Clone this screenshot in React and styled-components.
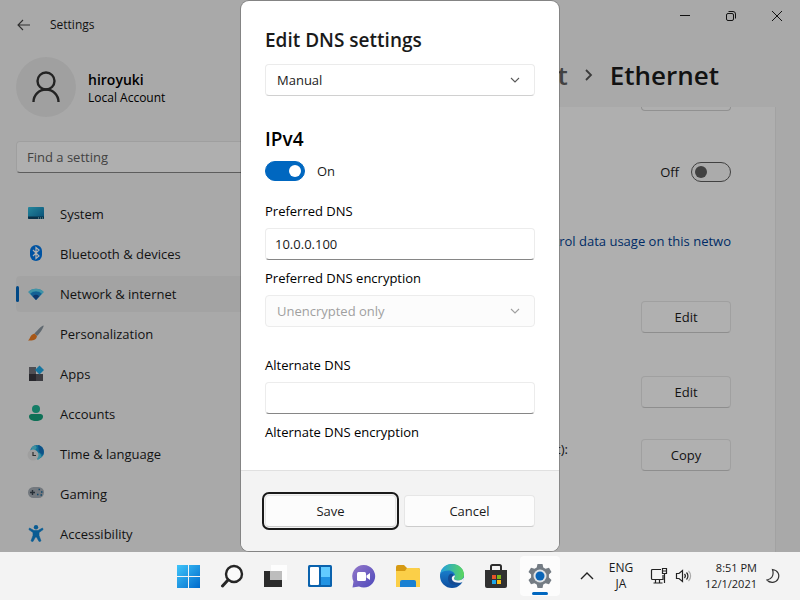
import React, { useState } from "react";
import styled, { createGlobalStyle } from "styled-components";

const Global = createGlobalStyle`
  * { box-sizing: border-box; }
  html, body { margin: 0; }
  body, button, input, select { font-family: "Open Sans", "Noto Sans", sans-serif; font-size: 13px; line-height: 20px; color: #1a1a1a; }
  button { cursor: pointer; }
`;

const Desktop = styled.div`
  display: flex; flex-direction: column; height: 100vh; overflow: hidden; background: #f3f3f3;
`;
const Window = styled.div`
  position: relative; flex: 1; min-height: 0; display: flex; flex-direction: column; overflow: hidden; background: #f3f3f3;
`;
const TitleBar = styled.header`
  display: flex; align-items: flex-start; justify-content: space-between; height: 50px; flex: none;
`;
const TitleLeft = styled.div`
  display: flex; align-items: center; gap: 19px; padding-left: 17px; height: 50px; font-size: 12px;
`;
const WindowControls = styled.div`
  display: flex;
`;
const PlainButton = styled.button`
  display: grid; place-items: center; padding: 0; border: 0; background: none; width: ${(p) => p.$w || 14}px; height: 32px;
`;
const Body = styled.div`
  flex: 1; min-height: 0; display: grid; grid-template-columns: 286px minmax(0, 1fr);
`;
const Sidebar = styled.aside`
  display: flex; flex-direction: column; padding-left: 16px; min-height: 0;
`;
const Profile = styled.div`
  display: flex; align-items: center; gap: 12px; margin-top: 7px;
`;
const Avatar = styled.div`
  width: 60px; height: 60px; border-radius: 50%; display: grid; place-items: center; background: #e6e6e6;
`;
const UserText = styled.div`
  padding-top: 2px; color: #000;
`;
const UserName = styled.div`
  font-weight: 600; line-height: 20px; font-size: 14px;
`;
const UserKind = styled.div`
  font-size: 12px; line-height: 16px;
`;
const Search = styled.input`
  margin-top: 24px; height: 32px; padding: 0 10px; border: 1px solid #e4e4e4; border-bottom-color: #868686; border-radius: 4px; background: #fbfbfb;
  &::placeholder { color: #606060; opacity: 1; }
`;
const Nav = styled.nav`
  display: flex; flex-direction: column; gap: 4px; margin-top: 23px;
`;
const NavItem = styled.a`
  display: flex; align-items: center; gap: 13px; flex: none; height: 36px; border-radius: 4px; color: #1a1a1a; text-decoration: none;
  background: ${(p) => (p.$active ? "#eaeaea" : "none")};
  &::before { content: ""; width: 3px; height: 16px; margin-right: -7px; border-radius: 2px; background: ${(p) => (p.$active ? "#0067c0" : "none")}; }
`;
const NavIcon = styled.svg`
  width: 20px; height: 20px; margin: 0 1px; flex: none; display: block;
`;
const Main = styled.main`
  display: flex; flex-direction: column; min-width: 0; padding: 0 24px;
`;
const Crumbs = styled.h1`
  display: flex; align-items: center; justify-content: flex-end; gap: 17px; margin: 7px 57px 14px 0; height: 36px; font-size: 26px; line-height: 36px; font-weight: 600; white-space: nowrap; flex: none; color: #1a1a1a;
`;
const CrumbLink = styled.a`
  color: #5f5f5f; text-decoration: none;
`;
const Card = styled.section`
  flex: 1; min-height: 0; overflow: hidden; background: #fbfbfb; border-right: 1px solid #e8e8e8; padding: 0 44px 0 16px;
`;
const CutButton = styled.div`
  height: 4px; width: 90px; margin-left: auto; border: 1px solid #d0d0d0; border-top: 0; border-radius: 0 0 4px 4px;
`;
const SettingRow = styled.div`
  display: flex; align-items: center; justify-content: ${(p) => (p.$spread ? "space-between" : "flex-end")}; gap: 12px; height: 32px; margin-top: ${(p) => p.$top}px;
`;
const DataLink = styled.a`
  display: flex; justify-content: flex-end; margin-top: 43px; white-space: nowrap; color: #003e92; text-decoration: none;
`;
const SpeedLabel = styled.span`
  width: 242px; text-align: right; padding-bottom: 12px;
`;
const Button = styled.button`
  height: 32px; width: 90px; flex: ${(p) => (p.$grow ? "1" : "none")}; border: 1px solid #e6e6e6; border-bottom-color: #cccccc; border-radius: 4px; background: #fcfcfc; padding: 0;
  outline: ${(p) => (p.$focus ? "2px solid #1a1a1a" : "none")}; outline-offset: 1px;
`;
const ToggleLabel = styled.label`
  display: flex; align-items: center; gap: 12px; width: fit-content;
`;
const Toggle = styled.input`
  appearance: none; margin: 0; width: 40px; height: 20px; border: 1px solid #5d5d5d; border-radius: 10px; background: #f5f5f5; display: flex; align-items: center; padding: 0 3px;
  &::before { content: ""; width: 12px; height: 12px; border-radius: 50%; background: #5d5d5d; }
  &:checked { background: #0067c0; border-color: #0067c0; justify-content: flex-end; }
  &:checked::before { background: #fff; }
`;
const Scrim = styled.div`
  position: absolute; inset: 0; display: flex; justify-content: center; padding: 1px; background: rgba(0, 0, 0, 0.3);
`;
const Dialog = styled.form`
  display: flex; flex-direction: column; width: 318px; max-width: 100%; border-radius: 8px; overflow: hidden; background: #fff; box-shadow: 0 0 0 1px rgba(0, 0, 0, 0.22);
`;
const DialogBody = styled.div`
  flex: 1; min-height: 0; overflow: hidden; display: flex; flex-direction: column; padding: 25px 24px 0;
`;
const DialogTitle = styled.h2`
  margin: 0; font-size: 19px; line-height: 28px; font-weight: 600;
`;
const GroupTitle = styled.h3`
  margin: 29px 0 0; font-size: 19px; line-height: 28px; font-weight: 600; color: #000;
`;
const ToggleLine = styled.div`
  margin-top: 8px;
`;
const Label = styled.label`
  margin-top: ${(p) => p.$top}px; line-height: 20px; color: #000;
`;
const TextBox = styled.input`
  flex: none; height: 32px; width: 100%; padding: 0 9px; border: 1px solid #ececec; border-bottom-color: #868686; border-radius: 4px; background: #fff; margin-top: 7px; outline: none;
`;
const SelectBox = styled.div`
  display: grid; align-items: center; flex: none; margin-top: ${(p) => p.$top}px;
  > * { grid-area: 1 / 1; }
  > svg { justify-self: end; margin-right: 14px; pointer-events: none; }
`;
const Select = styled.select`
  appearance: none; width: 100%; height: 32px; padding: 0 11px; border: 1px solid #ebebeb; border-bottom-color: #d0d0d0; border-radius: 4px; background: #fff; opacity: 1;
  &:disabled { color: #a0a0a0; background: #fcfcfc; border-color: #ececec; }
`;
const DialogFooter = styled.footer`
  flex: none; display: flex; gap: 8px; padding: 24px; border-top: 1px solid #e0e0e0; background: #f3f3f3;
`;

const Taskbar = styled.footer`
  flex: none; height: 48px; display: flex; align-items: center; justify-content: flex-end; background: #f3f3f3;
`;
const Apps = styled.div`
  display: flex; align-items: center; gap: 4px; margin-right: 15px;
`;
const AppButton = styled.button`
  position: relative; width: 40px; height: 40px; padding: 0; border: 0; border-radius: 4px; display: grid; place-items: center; background: ${(p) => (p.$active ? "#fcfcfc" : "none")};
  &::after { content: ""; position: absolute; bottom: 1px; left: 12px; right: 12px; height: 3px; border-radius: 2px; background: ${(p) => (p.$active ? "#0067c0" : "none")}; }
`;
const Tray = styled.div`
  display: flex; align-items: center;
`;
const TrayText = styled.button`
  border: 0; background: none; padding: 0; width: ${(p) => p.$w}px; text-align: ${(p) => p.$align || "center"}; font-size: ${(p) => p.$size || 12}px; line-height: 16px; margin-right: ${(p) => p.$gap}px;
`;
const TrayButton = styled.button`
  border: 0; background: none; padding: 0; display: grid; place-items: center; height: 40px; width: ${(p) => p.$w}px; margin-right: ${(p) => p.$gap || 0}px;
`;

const Chevron = ({ color = "#5a5a5a" }) => (
  <svg width="12" height="12" viewBox="0 0 12 12" fill="none" stroke={color} strokeWidth="1.1"><path d="M2 4l4 4 4-4" /></svg>
);

const icons = {
  system: (
    <>
      <defs><linearGradient id="sy" x1="0" y1="0" x2="1" y2="1"><stop stopColor="#35c1e0" /><stop offset="1" stopColor="#0a6fa8" /></linearGradient></defs>
      <rect x="2" y="3" width="16" height="12" rx="1" fill="url(#sy)" /><path d="M2 12.5h16V14a1 1 0 0 1-1 1H3a1 1 0 0 1-1-1z" fill="#0c4668" /><path d="M12 14h1M14 14h1M16 14h1" stroke="#aee" />
    </>
  ),
  bluetooth: (
    <><rect x="4" y="1" width="12" height="16" rx="6" fill="#0078e8" /><path d="M7 6l6 6-3 2.500V3.500L13 6l-6 6" fill="none" stroke="#fff" strokeWidth="1.2" /></>
  ),
  network: (
    <>
      <path d="M10 16L2.300 8a11 11 0 0 1 15.400 0z" fill="#35c3ee" /><path d="M10 16L4.300 10a8 8 0 0 1 11.400 0z" fill="#1a8ad4" /><path d="M10 16L6.700 12.300a5 5 0 0 1 6.600 0z" fill="#144f9c" /><path d="M2.300 8a11 11 0 0 1 15.400 0l-1.500 1.600a9 9 0 0 0-12.400 0z" fill="#5fd3ee" />
    </>
  ),
  brush: (
    <><path d="M17.500 1.500c.8.8-2.500 6.500-6.500 10.500L8.500 9.500C12 5.500 16.500 1 17.500 1.500z" fill="#8995a0" /><path d="M8.500 9.500L11 12c-.8 4-3.500 5-9 4.500 2.500-1.500 1.500-5.500 6.500-7z" fill="#ef7d22" /></>
  ),
  apps: (
    <><path d="M3 3h7v7H3z" fill="#707078" /><path d="M3 10h7v7H3z" fill="#393940" /><path d="M10 10h7v7h-7z" fill="#56565e" /><path d="M13.500 1.500L18 6l-4.500 4.500L9 6z" fill="#20a8e4" /></>
  ),
  accounts: (
    <><circle cx="10" cy="5" r="4" fill="#1db392" /><path d="M3 12.500C3 11 4 10 5.500 10h9c1.500 0 2.500 1 2.500 2.500 0 3-3 4.500-7 4.500s-7-1.500-7-4.500z" fill="#15a17c" /></>
  ),
  time: (
    <><circle cx="11" cy="8" r="7" fill="#18a0d8" /><path d="M6 3c3-3 6 0 4 2s0 3 3 4 1 5 4 2l-5 5-8-6z" fill="#56cde4" /><path d="M12 1c5 1 7 6 5 10l-4-3z" fill="#1475c2" /><circle cx="7" cy="11" r="5.500" fill="#e4e4e4" /><path d="M7 8v3.500h3" fill="none" stroke="#444" strokeWidth="1.2" /></>
  ),
  gaming: (
    <><rect x="2" y="3" width="16" height="11" rx="5.500" fill="#a5adb5" /><path d="M4 8.500h5M6.500 6v5" stroke="#39444f" strokeWidth="1.4" /><path d="M12.500 5.500h1.500M15 8h1.500M11 10.500h1.500M14.500 11h1.500" stroke="#1b699b" strokeWidth="1.6" /></>
  ),
  access: (
    <><circle cx="10" cy="3.200" r="2.200" fill="#0e84d3" /><path d="M3.500 4l4.500 2.500h4L16.500 4l.6 1.600L13 8.500v3l2 5.500-1.900.6L10.500 13h-1l-2.600 4.600L5 17l2-5.500v-3L2.900 5.600z" fill="#0e84d3" stroke="#0e84d3" strokeWidth=".6" /></>
  ),
};

const navItems = [
  ["System", "system"], ["Bluetooth & devices", "bluetooth"], ["Network & internet", "network"], ["Personalization", "brush"],
  ["Apps", "apps"], ["Accounts", "accounts"], ["Time & language", "time"], ["Gaming", "gaming"], ["Accessibility", "access"],
];

const taskIcons = [
  ["Start", <><defs><linearGradient id="st" x1="0" y1="0" x2="1" y2="1"><stop stopColor="#3fc5fa" /><stop offset="1" stopColor="#0069cb" /></linearGradient></defs><path d="M1 1h11v11H1zM13 1h11v11H13zM1 13h11v11H1zM13 13h11v11H13z" fill="url(#st)" /></>],
  ["Search", <><circle cx="14" cy="10" r="8" fill="#fafafa" stroke="#262626" strokeWidth="2.4" /><path d="M8 16l-5.500 6" stroke="#262626" strokeWidth="3" strokeLinecap="round" /></>],
  ["Task view", <><path d="M7 1h16v15H7z" fill="#fff" opacity=".8" /><path d="M0 7h18v16H0z" fill="#2b2b2b" /><path d="M6 7h12v9H6z" fill="#bdbdbd" /></>],
  ["Widgets", <><rect y="1" width="24" height="22" rx="1.500" fill="#0a62ad" /><rect x="2" y="3" width="9" height="18" rx="1" fill="#fff" /><rect x="13" y="3" width="9" height="10" fill="#62cbff" /><rect x="13" y="13" width="9" height="8" fill="#2193e3" /></>],
  ["Chat", <><defs><linearGradient id="ch" x1="0" y1="0" x2="1" y2="1"><stop stopColor="#9478c9" /><stop offset="1" stopColor="#4d48bb" /></linearGradient></defs><path d="M12 1a11.300 11.300 0 1 1-5 21.500L.5 23.500l1-6A11.300 11.300 0 0 1 12 1z" fill="url(#ch)" /><rect x="5" y="8" width="9" height="9" rx="1.500" fill="#fff" /><path d="M14.500 11.500L18 9v7l-3.500-2.500z" fill="#fff" /></>],
  ["File Explorer", <><path d="M0 3a2 2 0 0 1 2-2h6l3 3h11a2 2 0 0 1 2 2v5H0z" fill="#d69a13" /><path d="M0 7h9l2-3h11a2 2 0 0 1 2 2v17H0z" fill="#fbcf48" /><path d="M4 23v-5a2 2 0 0 1 2-2h12a2 2 0 0 1 2 2v5z" fill="#1980d2" /></>],
  ["Edge", <><defs><linearGradient id="e1" x1="0" y1="0" x2="1" y2="0"><stop stopColor="#229ee0" /><stop offset="1" stopColor="#5bd75b" /></linearGradient><linearGradient id="e2" x1="0" y1="0" x2="0" y2="1"><stop stopColor="#1d8fdb" /><stop offset="1" stopColor="#0d4d9e" /></linearGradient></defs><circle cx="12" cy="12" r="12" fill="url(#e2)" /><path d="M.3 9.500C2 3 6.500 0 12 0c7 0 12 5 12 10.500 0 4-3 6-6 6-2.500 0-4-1-4-2s1-1.500 1-3C15 9 12 6.500 8.500 6.500 5 6.500 2 7.500.3 9.500z" fill="url(#e1)" /><path d="M9 11c-3 5 1 11 7 10 3 0 5-2 6-3.500-3 1.500-7 1-9-1.500-1.500-2-1-3 .5-4.500 0-2-3-2.500-4.500-.5z" fill="#134b94" /><path d="M15 11.500c0 1.500-1 2-1 3s1.500 2 4 2c2.500 0 4.500-1 6-3l-.5 4c-3 2-9 1.500-11-1-1.500-2.500-.5-5 2.500-5z" fill="#f3f3f3" /></>],
  ["Microsoft Store", <><path d="M7 6V2.500A1.500 1.500 0 0 1 8.500 1h7A1.500 1.500 0 0 1 17 2.500V6" fill="none" stroke="#2d2d2d" strokeWidth="2" /><path d="M1 6h22v16a2 2 0 0 1-2 2H3a2 2 0 0 1-2-2z" fill="#303030" /><path d="M8 11h4v4H8z" fill="#e75228" /><path d="M13 11h4v4h-4z" fill="#7eb51c" /><path d="M8 16h4v4H8z" fill="#1ca5e8" /><path d="M13 16h4v4h-4z" fill="#fcb813" /></>],
  ["Settings", <><path d="M9.500 0h5l.8 3.500 2.200 1.300L21 3.700l2.500 4.300-2.600 2.500v3l2.600 2.500-2.500 4.300-3.500-1.100-2.200 1.300-.8 3.500h-5l-.8-3.500-2.200-1.300L3 20.300.5 16l2.600-2.500v-3L.5 8 3 3.700l3.500 1.100 2.200-1.300z" fill="#737b83" /><circle cx="12" cy="12" r="6.500" fill="#dfe3e7" /><circle cx="12" cy="12" r="4.500" fill="#0a65b7" /></>],
];

export default function App() {
  const [on, setOn] = useState(true);
  const [metered, setMetered] = useState(false);
  const [dns, setDns] = useState("10.0.0.100");
  return (
    <>
      <Global />
      <Desktop>
        <Window>
          <TitleBar>
            <TitleLeft>
              <PlainButton aria-label="Back"><svg width="14" height="12" viewBox="0 0 14 12" fill="none" stroke="#444" strokeWidth="1.1"><path d="M13 6H1M6 1L1 6l5 5" /></svg></PlainButton>
              <span>Settings</span>
            </TitleLeft>
            <WindowControls>
              <PlainButton $w={46} aria-label="Minimize"><svg width="10" height="10" viewBox="0 0 10 10" stroke="#1a1a1a"><path d="M0 4.500h10" /></svg></PlainButton>
              <PlainButton $w={46} aria-label="Restore"><svg width="10" height="10" viewBox="0 0 10 10" fill="none" stroke="#1a1a1a"><rect x=".5" y="2.500" width="7" height="7" rx="1.500" /><path d="M2.500.5h4.500a2.500 2.500 0 0 1 2.500 2.500V7.500" /></svg></PlainButton>
              <PlainButton $w={46} aria-label="Close"><svg width="10" height="10" viewBox="0 0 10 10" stroke="#1a1a1a"><path d="M0 0l10 10M10 0L0 10" /></svg></PlainButton>
            </WindowControls>
          </TitleBar>
          <Body>
            <Sidebar>
              <Profile>
                <Avatar><svg width="28" height="32" viewBox="0 0 28 32" fill="none" stroke="#333" strokeWidth="2.4"><circle cx="14" cy="10" r="8.500" /><path d="M1.500 31a12.500 12.500 0 0 1 25 0" /></svg></Avatar>
                <UserText><UserName>hiroyuki</UserName><UserKind>Local Account</UserKind></UserText>
              </Profile>
              <Search type="search" aria-label="Find a setting" placeholder="Find a setting" />
              <Nav>
                {navItems.map(([t, k]) => (
                  <NavItem key={k} href="#" $active={k === "network"}><NavIcon viewBox="0 0 20 20">{icons[k]}</NavIcon>{t}</NavItem>
                ))}
              </Nav>
            </Sidebar>
            <Main>
              <Crumbs>
                <CrumbLink href="#">Network &amp; internet</CrumbLink>
                <svg width="8" height="12" viewBox="0 0 8 12" fill="none" stroke="#555" strokeWidth="1.8"><path d="M1 1l5 5-5 5" /></svg>
                <span>Ethernet</span>
              </Crumbs>
              <Card>
                <CutButton />
                <SettingRow $top={45}>
                  <ToggleLabel>Off<Toggle type="checkbox" checked={metered} onChange={(e) => setMetered(e.target.checked)} /></ToggleLabel>
                </SettingRow>
                <DataLink href="#">Set a data limit to help control data usage on this netwo</DataLink>
                <SettingRow $top={50}><Button>Edit</Button></SettingRow>
                <SettingRow $top={43}><Button>Edit</Button></SettingRow>
                <SettingRow $top={31} $spread><SpeedLabel>Link speed (Receive/Transmit):</SpeedLabel><Button>Copy</Button></SettingRow>
              </Card>
            </Main>
          </Body>
          <Scrim>
            <Dialog role="dialog" aria-label="Edit DNS settings" onSubmit={(e) => e.preventDefault()}>
              <DialogBody>
                <DialogTitle>Edit DNS settings</DialogTitle>
                <SelectBox $top={10}><Select aria-label="Mode"><option>Manual</option></Select><Chevron /></SelectBox>
                <GroupTitle>IPv4</GroupTitle>
                <ToggleLine><ToggleLabel><Toggle type="checkbox" checked={on} onChange={(e) => setOn(e.target.checked)} />{on ? "On" : "Off"}</ToggleLabel></ToggleLine>
                <Label $top={20} htmlFor="dns1">Preferred DNS</Label>
                <TextBox id="dns1" value={dns} onChange={(e) => setDns(e.target.value)} />
                <Label $top={8} htmlFor="enc1">Preferred DNS encryption</Label>
                <SelectBox $top={7}><Select id="enc1" disabled><option>Unencrypted only</option></Select><Chevron color="#a0a0a0" /></SelectBox>
                <Label $top={28} htmlFor="dns2">Alternate DNS</Label>
                <TextBox id="dns2" />
                <Label $top={8} as="div">Alternate DNS encryption</Label>
              </DialogBody>
              <DialogFooter><Button type="submit" $grow $focus>Save</Button><Button type="button" $grow>Cancel</Button></DialogFooter>
            </Dialog>
          </Scrim>
        </Window>
        <Taskbar>
          <Apps>
            {taskIcons.map(([n, d]) => (
              <AppButton key={n} aria-label={n} $active={n === "Settings"}><svg width="24" height="24" viewBox="0 0 24 24">{d}</svg></AppButton>
            ))}
          </Apps>
          <Tray>
            <TrayButton $w={24} $gap={7} aria-label="Show hidden icons"><svg width="14" height="8" viewBox="0 0 14 8" fill="none" stroke="#222" strokeWidth="1.4"><path d="M1 7l6-6 6 6" /></svg></TrayButton>
            <TrayText $w={30} $gap={14}>ENG<br />JA</TrayText>
            <TrayButton $w={18} $gap={7} aria-label="Network"><svg width="18" height="18" viewBox="0 0 18 18" fill="none" stroke="#222" strokeWidth="1.2"><path d="M11 2.500H2.500a1 1 0 0 0-1 1v8a1 1 0 0 0 1 1H13V8M5.500 12.500V16M9.500 12.500V16M3.500 16h9M12.500 1.500h4v5h-4zM14.500 6.500V16M12.500 4h4" /></svg></TrayButton>
            <TrayButton $w={18} $gap={11} aria-label="Volume"><svg width="18" height="16" viewBox="0 0 18 16" fill="none" stroke="#222" strokeWidth="1.2"><path d="M1.500 5.500h2.500l3.500-3v11l-3.500-3H1.500zM9.500 6a3 3 0 0 1 0 4M11.500 4.500a5 5 0 0 1 0 7" /><path d="M13.500 3a7 7 0 0 1 0 10" stroke="#aaa" /></svg></TrayButton>
            <TrayText $w={53} $gap={8} $size={11} $align="right">8:51 PM<br />12/1/2021</TrayText>
            <TrayButton $w={16} $gap={19} aria-label="Focus assist"><svg width="14" height="16" viewBox="0 0 14 16" fill="none" stroke="#333" strokeWidth="1.2"><path d="M6.500 1.500C12 2 14 7 12 11s-8 4.500-11 1c4-.5 7.500-4 5.500-10.500z" /></svg></TrayButton>
          </Tray>
        </Taskbar>
      </Desktop>
    </>
  );
}
